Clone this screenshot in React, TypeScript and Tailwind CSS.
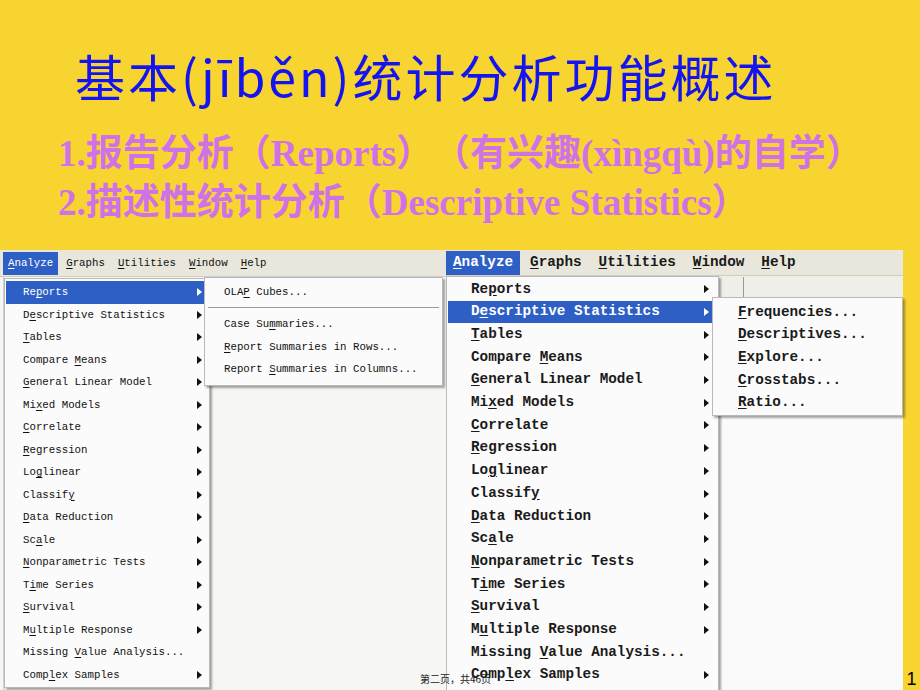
import React from 'react'

const ITEMS: { label: string; arrow: boolean }[] = [
  { label: 'Re&ports', arrow: true },
  { label: 'D&escriptive Statistics', arrow: true },
  { label: '&Tables', arrow: true },
  { label: 'Compare &Means', arrow: true },
  { label: '&General Linear Model', arrow: true },
  { label: 'Mi&xed Models', arrow: true },
  { label: '&Correlate', arrow: true },
  { label: '&Regression', arrow: true },
  { label: 'Lo&glinear', arrow: true },
  { label: 'Classif&y', arrow: true },
  { label: '&Data Reduction', arrow: true },
  { label: 'Sc&ale', arrow: true },
  { label: '&Nonparametric Tests', arrow: true },
  { label: 'T&ime Series', arrow: true },
  { label: '&Survival', arrow: true },
  { label: 'M&ultiple Response', arrow: true },
  { label: 'Missing &Value Analysis...', arrow: false },
  { label: 'Comp&lex Samples', arrow: true },
]

const MENUBAR = ['&Analyze', '&Graphs', '&Utilities', '&Window', '&Help']

function Mn({ label }: { label: string }) {
  const i = label.indexOf('&')
  if (i < 0) return <>{label}</>
  return (
    <>
      {label.slice(0, i)}
      <span className="underline underline-offset-2">{label[i + 1]}</span>
      {label.slice(i + 2)}
    </>
  )
}

function Arrow({ white }: { white?: boolean }) {
  return (
    <svg width="5" height="8" viewBox="0 0 5 8">
      <polygon points="0,0 5,4 0,8" fill={white ? '#ffffff' : '#111111'} />
    </svg>
  )
}

function LeftShot() {
  return (
    <div className="relative w-[446px] h-full bg-[#f6f6f4]">
      <div className="flex items-center h-[27px] pl-[3px] gap-[3px] bg-[#e9e7dc] border-b border-[#cfcdc2] text-[10.75px]">
        {MENUBAR.map((m, i) => (
          <div key={m} className={`px-[5px] h-[23px] flex items-center ${i === 0 ? 'bg-[#2d5fc4] text-white' : 'text-[#111]'}`}>
            <Mn label={m} />
          </div>
        ))}
      </div>
      {/* faint grid strip at the left edge */}
      <div className="absolute left-0 top-[27px] w-[4px] bottom-0 border-r border-[#d0d0d0]" />

      <div className="absolute left-[4px] top-[28px] w-[206px] h-[410px] bg-[#fbfbfb] border border-[#b9b9b9] shadow-[2px_2px_2px_rgba(0,0,0,0.35)] pt-[2px] text-[10.75px] text-[#111]">
        {ITEMS.map((it, i) => (
          <div key={it.label} className={`mx-[1px] h-[22.5px] flex items-center justify-between pl-[17px] pr-[6px] ${i === 0 ? 'bg-[#2d5fc4] text-white' : ''}`}>
            <span className="whitespace-pre"><Mn label={it.label} /></span>
            {it.arrow && <Arrow white={i === 0} />}
          </div>
        ))}
      </div>

      <div className="absolute left-[204px] top-[27px] w-[239px] h-[109px] bg-[#fbfbfb] border border-[#b9b9b9] shadow-[2px_2px_2px_rgba(0,0,0,0.35)] pt-[3px] text-[10.75px] text-[#111]">
        <div className="h-[22px] flex items-center pl-[19px] whitespace-pre"><Mn label="OLA&P Cubes..." /></div>
        <div className="mx-[3px] my-[4px] border-t border-[#9a9a9a] border-b border-b-white" />
        <div className="h-[22.5px] flex items-center pl-[19px] whitespace-pre"><Mn label="Case Su&mmaries..." /></div>
        <div className="h-[22.5px] flex items-center pl-[19px] whitespace-pre"><Mn label="&Report Summaries in Rows..." /></div>
        <div className="h-[22.5px] flex items-center pl-[19px] whitespace-pre"><Mn label="Report &Summaries in Columns..." /></div>
      </div>
    </div>
  )
}

function RightShot() {
  return (
    <div className="relative w-[457px] h-full bg-[#fafafa]">
      <div className="flex items-center h-[26px] gap-[3px] bg-[#e9e7dc] border-b border-[#cfcdc2] text-[14.3px] font-bold">
        {MENUBAR.map((m, i) => (
          <div key={m} className={`px-[7px] h-[24px] flex items-center ${i === 0 ? 'bg-[#2d5fc4] text-white' : 'text-[#1a1a1a]'}`}>
            <Mn label={m} />
          </div>
        ))}
      </div>
      {/* toolbar remnant behind the menus */}
      <div className="absolute left-[272px] top-[26px] right-0 h-[22px] bg-[#efeee8] border-b border-[#c8c8c8]" />
      <div className="absolute left-[297px] top-[27px] h-[20px] border-l border-[#999]" />

      <div className="absolute left-0 top-[26px] w-[273px] h-[418px] bg-[#fbfbfb] border border-[#b9b9b9] shadow-[2px_2px_2px_rgba(0,0,0,0.35)] pt-[1px] text-[14.3px] font-bold text-[#1a1a1a]">
        {ITEMS.map((it, i) => (
          <div key={it.label} className={`mx-[1px] h-[22.7px] flex items-center justify-between pl-[23px] pr-[8px] ${i === 1 ? 'bg-[#2d5fc4] text-white' : ''}`}>
            <span className="whitespace-pre"><Mn label={it.label} /></span>
            {it.arrow && <Arrow white={i === 1} />}
          </div>
        ))}
      </div>

      <div className="absolute left-[266px] top-[47px] w-[191px] h-[119px] bg-[#fbfbfb] border border-[#b9b9b9] shadow-[2px_2px_2px_rgba(0,0,0,0.35)] pt-[3px] text-[14.3px] font-bold text-[#1a1a1a]">
        {['&Frequencies...', '&Descriptives...', '&Explore...', '&Crosstabs...', '&Ratio...'].map((s) => (
          <div key={s} className="h-[22.7px] flex items-center pl-[25px] whitespace-pre"><Mn label={s} /></div>
        ))}
      </div>
    </div>
  )
}

export default function App() {
  return (
    <div className="relative w-[920px] h-[690px] overflow-hidden bg-[#f8d431] flex flex-col" style={{ fontFamily: '"Liberation Mono", "DejaVu Sans Mono", monospace' }}>
      <h1 className="mt-[45px] pl-[75px] h-[60px] leading-[60px] text-[50px] tracking-[3px] text-[#1414f0] whitespace-nowrap" style={{ fontFamily: '"Noto Sans CJK SC", "Noto Sans", sans-serif' }}>
        基本(jīběn)统计分析功能概述
      </h1>
      <div className="mt-[24px] pl-[58px] text-[37px] leading-[49px] font-bold text-[#cf72e6] whitespace-nowrap" style={{ fontFamily: '"Liberation Serif", "Noto Sans CJK SC", serif', textSpacingTrim: 'space-all' } as React.CSSProperties}>
        <div>1.报告分析（Reports）（有兴趣(xìngqù)的自学）</div>
        <div>2.描述性统计分析（Descriptive Statistics）</div>
      </div>
      <div className="mt-[23px] flex h-[440px]">
        <LeftShot />
        <RightShot />
        <div className="flex-1 flex items-end justify-center pb-[2px]">
          <span className="text-[18px] leading-none text-black" style={{ fontFamily: '"Liberation Sans", sans-serif' }}>1</span>
        </div>
      </div>
      <div className="absolute left-[420px] top-[671px] text-[10px] text-[#222]" style={{ fontFamily: '"Noto Sans CJK SC", sans-serif' }}>
        第二页，共46页
      </div>
    </div>
  )
}
